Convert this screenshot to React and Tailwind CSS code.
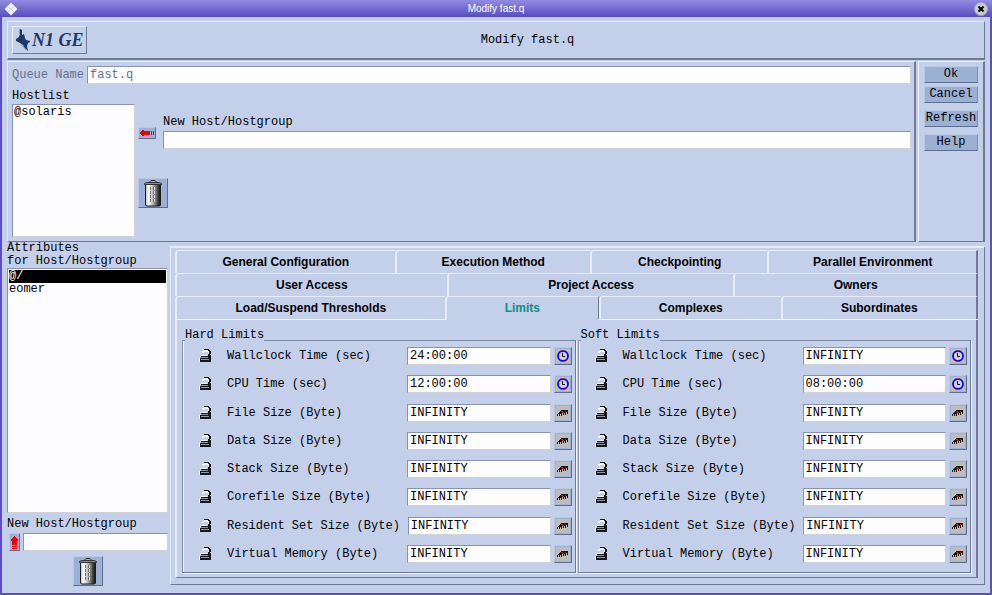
import { useState } from "react";

const tabRows = [
    {
        cols: "grid-cols-[219fr_195fr_177fr_210fr]",
        tabs: ["General Configuration", "Execution Method", "Checkpointing", "Parallel Environment"],
    },
    {
        cols: "grid-cols-[271fr_286fr_244fr]",
        tabs: ["User Access", "Project Access", "Owners"],
    },
    {
        cols: "grid-cols-[269fr_154fr_181fr_197fr]",
        tabs: ["Load/Suspend Thresholds", "Limits", "Complexes", "Subordinates"],
    },
];

const hardLimits = [
    { label: "Wallclock Time (sec)", value: "24:00:00", time: true },
    { label: "CPU Time (sec)", value: "12:00:00", time: true },
    { label: "File Size (Byte)", value: "INFINITY" },
    { label: "Data Size (Byte)", value: "INFINITY" },
    { label: "Stack Size (Byte)", value: "INFINITY" },
    { label: "Corefile Size (Byte)", value: "INFINITY" },
    { label: "Resident Set Size (Byte)", value: "INFINITY" },
    { label: "Virtual Memory (Byte)", value: "INFINITY" },
];

const softLimits = hardLimits.map((limit, index) => ({
    ...limit,
    value: index === 1 ? "08:00:00" : "INFINITY",
}));

const raised = "border border-t-[#e6edf8] border-l-[#e6edf8] border-b-[#6c7a96] border-r-[#6c7a96]";
const sunken = "border border-t-[#8794ac] border-l-[#8794ac] border-b-[#cfd2d8] border-r-[#cfd2d8] bg-[#fdfcfe]";
const field = `h-[18px] min-w-0 px-0.5 outline-none ${sunken}`;
const iconButton =
    "flex shrink-0 items-center justify-center border border-t-[#b9c9e4] border-l-[#b9c9e4] border-b-[#5d6d8f] border-r-[#5d6d8f] bg-[#9bb2d6]";

const LockIcon = () => (
    <svg width="13" height="14" viewBox="0 0 13 14" shapeRendering="crispEdges" aria-hidden="true">
        <path d="M3 2h2V1h4v1h1v3H9V3H5v1H3zM1 7h1V6h6v1H2v1H1zM0 9h1v4H0z" fill="#f5f7fb" />
        <path d="M5 0h5v1h1v1h1v3h-1v1h1v7H1V9h1V7h7V5h1V2H9V1H5z" fill="#15171c" />
        <path d="M2 8h7v1H2zM2 10h8v1H2z" fill="#8f98a8" />
    </svg>
);

const ClockIcon = () => (
    <svg width="14" height="14" viewBox="0 0 14 14" aria-hidden="true">
        <rect width="14" height="14" fill="#bfbfc3" />
        <circle cx="7" cy="7" r="5" fill="#d0d2de" stroke="#0508f0" strokeWidth="1.8" />
        <path d="M3 2h1v1H3zM10 2h1v1h-1zM3 11h1v1H3zM10 11h1v1h-1zM6 1h2v1H6zM6 12h2v1H6z" fill="#f01818" />
        <path d="M6.500 4v3.500H9" stroke="#111" fill="none" />
    </svg>
);

const MemoryIcon = () => (
    <svg width="14" height="14" viewBox="0 0 14 14" shapeRendering="crispEdges" aria-hidden="true">
        <rect width="14" height="14" fill="#bdbdbd" />
        <path
            d="M5 4h7v4h-1V6h-1v3H9V7H8v2H7V7H6v3H5V8H4v2H3V8H2v2H1V8h1V7h1V6h1V5h1z"
            fill="#161616"
        />
        <path d="M5 5h2v1H5zM6 6h2v1H6zM9 5h1v1H9z" fill="#e01010" />
    </svg>
);

const TrashIcon = () => (
    <svg width="18" height="27" viewBox="0 0 18 27" aria-hidden="true">
        <defs>
            <linearGradient id="can">
                <stop offset="0" stopColor="#b9b9b9" />
                <stop offset="0.2" stopColor="#ffffff" />
                <stop offset="0.5" stopColor="#b4b4b4" />
                <stop offset="0.8" stopColor="#4a4a4a" />
                <stop offset="1" stopColor="#111" />
            </linearGradient>
        </defs>
        <path d="M6 2.500V1.500l1-1h4l1 1v1" stroke="#222" fill="none" />
        <path d="M1.500 4.500h15v20.500l-1 1h-13l-1-1z" fill="url(#can)" stroke="#1b1b1b" />
        <path d="M0.500 4.500v-1l2-1h13l2 1v1z" fill="#8c8c8c" stroke="#333" />
        <path d="M6.500 7v16M9.500 7v16M12.500 7v16" stroke="#6f6f6f" strokeDasharray="3 1" />
        <path d="M7.500 7v16M10.500 7v16" stroke="#d5d5d5" strokeDasharray="3 1" />
    </svg>
);

const LeftArrowIcon = () => (
    <svg width="16" height="8" viewBox="0 0 16 8" shapeRendering="crispEdges" aria-hidden="true">
        <path d="M1 3h1V2h1V1h2v1h6v4H5v1H3V6H2V5H1zM12 2h1v4h-1zM14 2h1v4h-1z" fill="#f00000" />
    </svg>
);

const UpArrowIcon = () => (
    <svg width="9" height="16" viewBox="0 0 9 16" shapeRendering="crispEdges" aria-hidden="true">
        <path d="M4 2h1v1h1v1h1v1h1v2H7v4H2V7H1V5h1V4h1V3h1zM2 12h5v1H2zM2 14h5v1H2z" fill="#f00000" />
    </svg>
);

const Logo = () => (
    <div className={`flex h-[28px] w-[75px] items-center pl-0.5 text-[#1d3a6a] ${raised}`}>
        <svg width="17" height="24" viewBox="0 0 17 24" aria-hidden="true">
            <path
                d="M5 1l2 1 0 5 2-1 1 4 1 2 4 1v1l-2 1-1 3 1 5-3-2-2-4-3-2-2-1-2-1v-2l3-2 1-3z"
                fill="#1d3a6a"
            />
            <path d="M4.500 1v5M6 17l6 5" stroke="#8d99ae" strokeWidth="1" fill="none" />
        </svg>
        <span className="font-['Liberation_Serif',serif] text-[18px] leading-6 font-bold whitespace-nowrap italic">
            N1 GE
        </span>
    </div>
);

const LimitGroup = ({ id, title, limits }) => (
    <fieldset
        className="flex min-w-0 flex-col border border-t-[#7f8ca6] border-r-[#6c7a96] border-b-[#6c7a96] border-l-[#8794ac] pr-[3px] pb-[9px] pl-4 shadow-[1px_1px_0_#edf2fb,inset_1px_0_0_#edf2fb]"
    >
        <legend className="-ml-3.5 pb-2.5 leading-3">{title}</legend>
        <div className="-mt-1 flex flex-1 flex-col justify-between">
            {limits.map((limit, index) => (
                <div key={limit.label} className="flex items-center">
                    <LockIcon />
                    <label
                        htmlFor={`${id}-${index}`}
                        className="ml-[15px] min-w-[180px] shrink-0 pr-2 leading-4 whitespace-nowrap"
                    >
                        {limit.label}
                    </label>
                    <input id={`${id}-${index}`} className={`flex-1 ${field}`} defaultValue={limit.value} />
                    <button
                        type="button"
                        aria-label={`Edit ${limit.label}`}
                        className={`ml-[3px] size-[18px] ${iconButton}`}
                    >
                        {limit.time ? <ClockIcon /> : <MemoryIcon />}
                    </button>
                </div>
            ))}
        </div>
    </fieldset>
);

const ActionButton = ({ children, className = "" }) => (
    <button
        type="button"
        className={`h-[17px] border border-t-[#b9c9e4] border-l-[#b9c9e4] border-b-[#5d6d8f] border-r-[#7f90b0] bg-[#9bb0d3] leading-[15px] ${className}`}
    >
        {children}
    </button>
);

const App = () => {
    const [activeTab, setActiveTab] = useState("Limits");
    const [selected, setSelected] = useState("@/");

    return (
        <div className="flex min-h-screen flex-col bg-[#5b4fc4] font-['Liberation_Mono',monospace] text-[12px] text-black">
            {/* Title bar */}
            <header className="flex h-[17px] items-center justify-between bg-gradient-to-b from-[#918ce0] to-[#594cc0] px-1">
                <svg width="14" height="14" viewBox="0 0 14 14" aria-hidden="true">
                    <path d="M7 0.500l6.500 6.500-6.500 6.500L0.500 7z" fill="#f1f1fb" />
                    <path d="M3.500 4l7 6.500M10.500 4l-7 6.500" stroke="#a9a6dc" strokeDasharray="1 1" />
                </svg>
                <span className="font-['Liberation_Sans',sans-serif] text-[10px] text-white">Modify fast.q</span>
                <button type="button" aria-label="Close">
                    <svg width="14" height="14" viewBox="0 0 14 14" aria-hidden="true">
                        <circle cx="7" cy="7" r="6.500" fill="#c9cbd2" stroke="#a5a5b4" />
                        <path d="M4.500 4.500l5 5M9.500 4.500l-5 5" stroke="#000" strokeWidth="2" />
                    </svg>
                </button>
            </header>

            <main className="mx-0.5 mb-0.5 flex flex-1 flex-col bg-[#c4d0ea] px-[5px] pt-1">
                {/* Heading */}
                <div className={`grid grid-cols-[75px_1fr] items-center border-b-2 px-1 py-1 ${raised}`}>
                    <Logo />
                    <h1 className="pr-[12px] text-center">Modify fast.q</h1>
                </div>

                <div className="mt-px flex">
                    <section className={`min-w-0 flex-1 border-r-2 pt-1 pr-[3px] pb-1 pl-1 ${raised}`}>
                        <div className="flex items-center gap-[3px]">
                            <label htmlFor="queue" className="text-[#66718a]">Queue Name</label>
                            <input
                                id="queue"
                                disabled
                                className={`flex-1 text-[#66718a] ${field}`}
                                defaultValue="fast.q"
                            />
                        </div>
                        <h2 id="hostlist" className="mt-1 leading-4">Hostlist</h2>
                        <div className="flex gap-[3px]">
                            <ul
                                role="listbox"
                                aria-labelledby="hostlist"
                                className={`h-[133px] w-[123px] pt-px ${sunken}`}
                            >
                                <li role="option" aria-selected="false" className="px-px leading-[13px]">@solaris</li>
                            </ul>
                            <div className="flex-1">
                                <div className="flex items-start gap-[7px] pt-2.5">
                                    <button
                                        type="button"
                                        aria-label="Add to hostlist"
                                        className={`mt-[13px] h-3 w-[18px] ${iconButton}`}
                                    >
                                        <LeftArrowIcon />
                                    </button>
                                    <div className="flex flex-1 flex-col gap-px">
                                        <label htmlFor="newhost" className="leading-4">New Host/Hostgroup</label>
                                        <input id="newhost" className={field} />
                                    </div>
                                </div>
                                <button
                                    type="button"
                                    aria-label="Delete from hostlist"
                                    className={`mt-[29px] size-[30px] ${iconButton}`}
                                >
                                    <TrashIcon />
                                </button>
                            </div>
                        </div>
                    </section>

                    <aside className={`ml-0.5 flex w-[67px] flex-col border-r-2 px-[5px] pt-1 ${raised}`}>
                        <ActionButton>Ok</ActionButton>
                        <ActionButton className="mt-[3px]">Cancel</ActionButton>
                        <ActionButton className="mt-[7px]">Refresh</ActionButton>
                        <ActionButton className="mt-[7px]">Help</ActionButton>
                    </aside>
                </div>

                <div className="flex flex-1">
                    {/* Attributes column */}
                    <section className="flex w-[161px] flex-col pb-[7px]">
                        <h2 id="attributes" className="leading-[13px]">
                            Attributes
                            <br />
                            for Host/Hostgroup
                        </h2>
                        <ul
                            role="listbox"
                            aria-labelledby="attributes"
                            className={`flex-1 p-px ${sunken}`}
                        >
                            {["@/", "eomer"].map((host) => (
                                <li
                                    key={host}
                                    role="option"
                                    aria-selected={selected === host}
                                    onClick={() => setSelected(host)}
                                    className={`cursor-pointer leading-[13px] ${selected === host ? "bg-black text-white" : ""}`}
                                >
                                    {host}
                                </li>
                            ))}
                        </ul>
                        <label htmlFor="newattr" className="mt-[3px] leading-4">New Host/Hostgroup</label>
                        <div className="mt-px flex gap-[3px] pl-0.5">
                            <button
                                type="button"
                                aria-label="Add attribute host"
                                className={`h-[18px] w-[11px] ${iconButton}`}
                            >
                                <UpArrowIcon />
                            </button>
                            <input id="newattr" className={`flex-1 ${field}`} />
                        </div>
                        <button
                            type="button"
                            aria-label="Delete attribute host"
                            className={`mt-[5px] size-[30px] self-center ${iconButton}`}
                        >
                            <TrashIcon />
                        </button>
                    </section>

                    {/* Tabbed configuration */}
                    <section className={`mt-1 mb-2 ml-0.5 flex min-w-0 flex-1 flex-col border-t-2 px-1 pt-0.5 pr-1.5 pb-1.5 ${raised}`}>
                        <div role="tablist" className="font-['Liberation_Sans',sans-serif] font-bold">
                            {tabRows.map((row) => (
                                <div key={row.cols} className={`grid ${row.cols}`}>
                                    {row.tabs.map((tab) => (
                                        <button
                                            key={tab}
                                            type="button"
                                            role="tab"
                                            aria-selected={tab === activeTab}
                                            onClick={() => setActiveTab(tab)}
                                            className={`h-[23px] rounded-tl border-t border-l-2 border-[#e6edf8] leading-5 last:border-r-2 last:border-r-[#6c7a96] ${
                                                tab === activeTab ? "border-r border-r-[#6c7a96] text-[#0b8f88]" : ""
                                            }`}
                                        >
                                            {tab}
                                        </button>
                                    ))}
                                </div>
                            ))}
                        </div>
                        <div className="grid grid-cols-[269fr_154fr_378fr]">
                            <div className="h-px bg-[#f0f4fc]" />
                            <div className="h-px border-l border-[#f0f4fc]" />
                            <div className="h-px bg-[#f0f4fc]" />
                        </div>
                        <div
                            role="tabpanel"
                            aria-label={activeTab}
                            className="grid flex-1 grid-cols-2 gap-0.5 border-r-2 border-b border-l-2 border-r-[#6c7a96] border-b-[#6c7a96] border-l-[#e6edf8] px-[5px] pt-[9px] pb-1"
                        >
                            <LimitGroup id="hard" title="Hard Limits" limits={hardLimits} />
                            <LimitGroup id="soft" title="Soft Limits" limits={softLimits} />
                        </div>
                    </section>
                </div>
            </main>
        </div>
    );
};

export default App;
